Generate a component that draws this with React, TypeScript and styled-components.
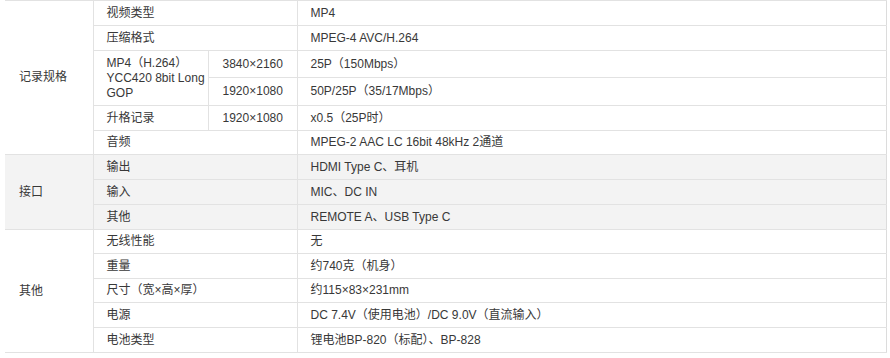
import React from 'react';
import styled, { createGlobalStyle } from 'styled-components';

const GlobalStyle = createGlobalStyle`
    body {
        margin: 0;
        background: #ffffff;
        font-family: 'Liberation Sans', 'Noto Sans CJK SC', sans-serif;
    }
`;

const Wrapper = styled.div`
    padding-left: 5px;
    width: 882px;
`;

const Table = styled.table`
    width: 100%;
    table-layout: fixed;
    border-collapse: collapse;
    font-size: 12px;
    color: #383838;
    border-right: 1px solid #dcdcdc;
`;

const Row = styled.tr<{ $h: number; $gray?: boolean }>`
    height: ${(p) => p.$h}px;
    background: ${(p) => (p.$gray ? '#f3f3f3' : '#ffffff')};
`;

const Cell = styled.td<{ $pad?: number; $padRight?: number }>`
    padding: 0 ${(p) => p.$padRight ?? 8}px 0 ${(p) => p.$pad ?? 13}px;
    border-top: 1px solid #e2e2e2;
    border-bottom: 1px solid #e2e2e2;
    border-left: 1px solid #e2e2e2;
    line-height: 15px;
    vertical-align: middle;
    white-space: normal;
`;

const GroupCell = styled(Cell)`
    border-left: none;
`;

const App = () => {
    return (
        <Wrapper>
            <GlobalStyle />
            <Table>
                <colgroup>
                    <col style={{ width: 88 }} />
                    <col style={{ width: 115 }} />
                    <col style={{ width: 89 }} />
                    <col />
                </colgroup>
                <tbody>
                    <Row $h={25}>
                        <GroupCell rowSpan={6} $pad={14}>记录规格</GroupCell>
                        <Cell colSpan={2}>视频类型</Cell>
                        <Cell>MP4</Cell>
                    </Row>
                    <Row $h={25}>
                        <Cell colSpan={2}>压缩格式</Cell>
                        <Cell>MPEG-4 AVC/H.264</Cell>
                    </Row>
                    <Row $h={27}>
                        <Cell rowSpan={2} $padRight={0}>MP4（H.264）YCC420 8bit Long GOP</Cell>
                        <Cell $pad={14}>3840×2160</Cell>
                        <Cell>25P（150Mbps）</Cell>
                    </Row>
                    <Row $h={28}>
                        <Cell $pad={14}>1920×1080</Cell>
                        <Cell>50P/25P（35/17Mbps）</Cell>
                    </Row>
                    <Row $h={25}>
                        <Cell>升格记录</Cell>
                        <Cell $pad={14}>1920×1080</Cell>
                        <Cell>x0.5（25P时）</Cell>
                    </Row>
                    <Row $h={24}>
                        <Cell colSpan={2}>音频</Cell>
                        <Cell>MPEG-2 AAC LC 16bit 48kHz 2通道</Cell>
                    </Row>

                    <Row $h={25} $gray>
                        <GroupCell rowSpan={3} $pad={14}>接口</GroupCell>
                        <Cell colSpan={2}>输出</Cell>
                        <Cell>HDMI Type C、耳机</Cell>
                    </Row>
                    <Row $h={25} $gray>
                        <Cell colSpan={2}>输入</Cell>
                        <Cell>MIC、DC IN</Cell>
                    </Row>
                    <Row $h={25} $gray>
                        <Cell colSpan={2}>其他</Cell>
                        <Cell>REMOTE A、USB Type C</Cell>
                    </Row>

                    <Row $h={24}>
                        <GroupCell rowSpan={5} $pad={14}>其他</GroupCell>
                        <Cell colSpan={2}>无线性能</Cell>
                        <Cell>无</Cell>
                    </Row>
                    <Row $h={25}>
                        <Cell colSpan={2}>重量</Cell>
                        <Cell>约740克（机身）</Cell>
                    </Row>
                    <Row $h={24}>
                        <Cell colSpan={2}>尺寸（宽×高×厚）</Cell>
                        <Cell>约115×83×231mm</Cell>
                    </Row>
                    <Row $h={25}>
                        <Cell colSpan={2}>电源</Cell>
                        <Cell>DC 7.4V（使用电池）/DC 9.0V（直流输入）</Cell>
                    </Row>
                    <Row $h={25}>
                        <Cell colSpan={2}>电池类型</Cell>
                        <Cell>锂电池BP-820（标配）、BP-828</Cell>
                    </Row>
                </tbody>
            </Table>
        </Wrapper>
    );
};

export default App;
